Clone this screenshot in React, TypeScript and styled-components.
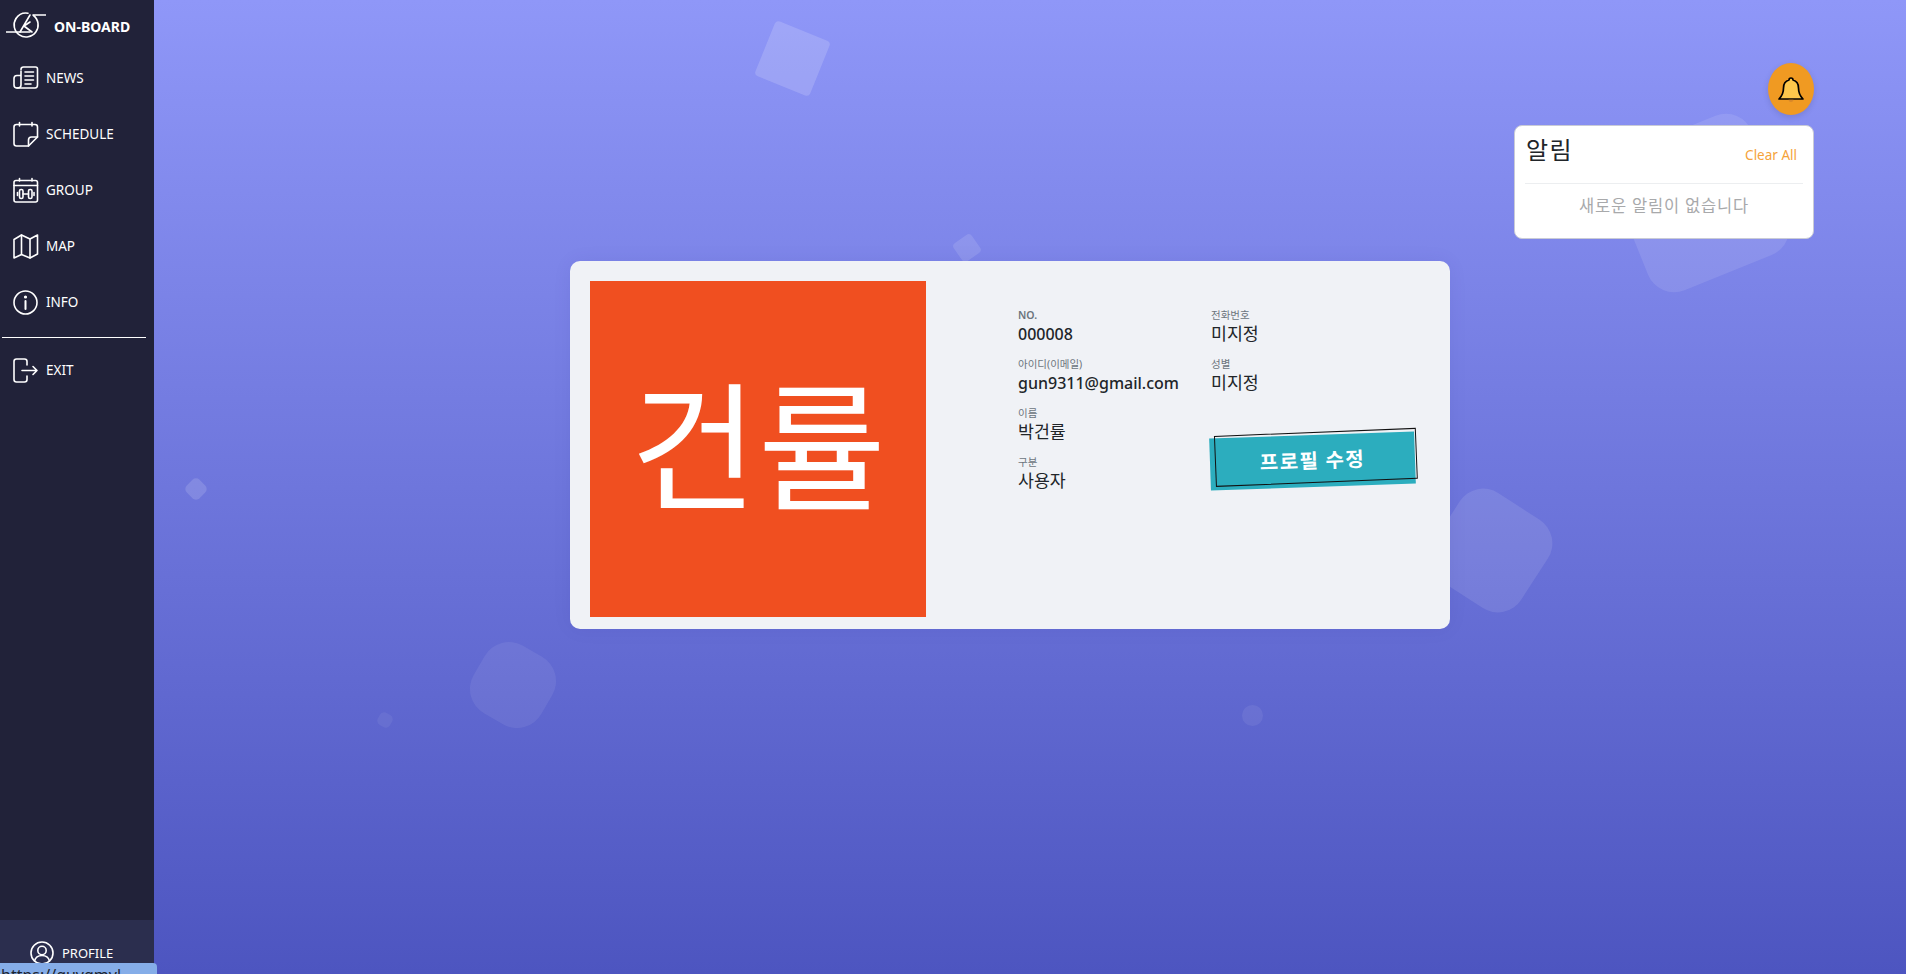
import React from 'react';
import styled, { createGlobalStyle } from 'styled-components';

const GlobalStyle = createGlobalStyle`
  html, body {
    margin: 0;
    height: 100%;
    overflow: hidden;
    font-family: "Noto Sans", "Noto Sans CJK KR", sans-serif;
  }
  #root {
    height: 100%;
  }
`;

const Page = styled.div`
  position: relative;
  display: flex;
  width: 100%;
  height: 974px;
  overflow: hidden;
`;

const Sidebar = styled.nav`
  flex: 0 0 154px;
  display: flex;
  flex-direction: column;
  background: #212239;
  color: #fff;
`;

const Brand = styled.div`
  display: flex;
  align-items: center;
  gap: 8px;
  box-sizing: border-box;
  height: 50px;
  padding: 2px 0 0 6px;
  font-size: 14px;
  font-weight: 700;
`;

const MenuList = styled.ul`
  list-style: none;
  margin: 0;
  padding: 0;
`;

const MenuItem = styled.li`
  display: flex;
  align-items: center;
  gap: 7px;
  height: 56px;
  padding-left: 12px;
  font-size: 13.5px;
  line-height: 18px;

  svg {
    flex: none;
  }
`;

const Divider = styled.hr`
  width: 144px;
  margin: 7px 0 4px 2px;
  border: 0;
  border-top: 1px solid #fff;
`;

const ProfileRow = styled.div`
  display: flex;
  align-items: center;
  gap: 8px;
  box-sizing: border-box;
  height: 54px;
  margin-top: auto;
  padding: 12px 0 0 30px;
  font-size: 13px;
  background: #2b2e4e;
`;

const StatusTip = styled.div`
  position: absolute;
  left: 0;
  bottom: 0;
  width: 157px;
  height: 11px;
  overflow: hidden;
  background: #85ade8;
  border-top-right-radius: 4px;
  color: #1c2430;
  font-size: 16px;
  line-height: 24px;
  padding-left: 1px;
  box-sizing: border-box;
`;

const Main = styled.main`
  position: relative;
  flex: 1;
  padding: 261px 0 0 416px;
  background: linear-gradient(180deg, #8f97f8 0%, #4d55c0 100%);
`;

const Shape = styled.span<{ $x: number; $y: number; $size: number; $rotate: number; $radius: number; $alpha: number }>`
  position: absolute;
  left: ${(p) => p.$x - 154}px;
  top: ${(p) => p.$y}px;
  width: ${(p) => p.$size}px;
  height: ${(p) => p.$size}px;
  border-radius: ${(p) => p.$radius}px;
  background: rgba(255, 255, 255, ${(p) => p.$alpha});
  transform: rotate(${(p) => p.$rotate}deg);
`;

const Card = styled.section`
  position: relative;
  display: flex;
  box-sizing: border-box;
  width: 880px;
  height: 368px;
  padding: 20px;
  background: #f0f2f6;
  border-radius: 10px;
  box-shadow: 0 0 20px rgba(40, 40, 120, 0.06);
`;

const Avatar = styled.div`
  flex: none;
  display: flex;
  align-items: center;
  justify-content: center;
  box-sizing: border-box;
  width: 336px;
  height: 336px;
  padding-bottom: 22px;
  background: #f04f20;
`;

const AvatarText = styled.span`
  color: #fff;
  font-family: "Noto Sans CJK KR", sans-serif;
  font-size: 139px;
  font-weight: 400;
  line-height: 1;
  filter: blur(0.6px);
`;

const InfoGrid = styled.div`
  display: grid;
  grid-template-columns: 193px 200px;
  grid-auto-rows: 49px;
  margin: 27px 0 0 92px;
`;

const Field = styled.div`
  display: flex;
  flex-direction: column;
`;

const FieldLabel = styled.span<{ $bold?: boolean }>`
  font-size: 10.5px;
  font-weight: ${(p) => (p.$bold ? 600 : 400)};
  line-height: 15px;
  color: #6c757d;
`;

const FieldValue = styled.span<{ $latin?: boolean }>`
  font-size: ${(p) => (p.$latin ? 16 : 17.3)}px;
  font-weight: ${(p) => (p.$latin ? 500 : 400)};
  line-height: 22px;
  color: #212529;
`;

const EditCell = styled.div`
  grid-column: 2;
  grid-row: 3 / span 2;
  padding-top: 29px;
`;

const EditButton = styled.button`
  position: relative;
  display: block;
  width: 205px;
  height: 52px;
  margin-left: -1px;
  padding: 0 0 4px;
  border: 0;
  background: #2cadbe;
  color: #fff;
  font-family: "Noto Sans CJK KR", sans-serif;
  font-size: 20px;
  font-weight: 700;
  letter-spacing: 1.5px;
  transform: rotate(-2deg);

  &::after {
    content: '';
    position: absolute;
    inset: -3px -2px 4px 5px;
    border: 1px solid #111;
    transform: rotate(-0.3deg);
  }
`;

const BellButton = styled.div`
  position: absolute;
  top: 63px;
  right: 92px;
  display: flex;
  align-items: center;
  justify-content: center;
  width: 46px;
  height: 52px;
  padding-top: 2px;
  box-sizing: border-box;
  border-radius: 50%;
  background: #f09a22;
  box-shadow: 0 2px 6px rgba(0, 0, 0, 0.12);
`;

const NoticePanel = styled.aside`
  position: absolute;
  top: 125px;
  right: 92px;
  box-sizing: border-box;
  width: 300px;
  height: 114px;
  padding: 0 10px;
  background: #fff;
  border: 1px solid #c9cbd6;
  border-radius: 8px;
`;

const NoticeHead = styled.div`
  display: flex;
  align-items: center;
  justify-content: space-between;
  box-sizing: border-box;
  height: 58px;
  padding: 0 6px 13px 1px;
  border-bottom: 1px solid #eceef0;
`;

const NoticeTitle = styled.span`
  font-family: "Noto Sans CJK KR", sans-serif;
  font-size: 24px;
  font-weight: 400;
  letter-spacing: 1.5px;
  color: #212529;
`;

const ClearAll = styled.span`
  padding-top: 14px;
  font-size: 13.5px;
  color: #f5a33a;
`;

const NoticeEmpty = styled.div`
  padding-top: 10px;
  text-align: center;
  font-size: 16.5px;
  font-weight: 400;
  letter-spacing: 0.8px;
  line-height: 24px;
  color: #a8a9ab;
`;

const Icon = styled.svg.attrs({
  fill: 'none',
  stroke: 'currentColor',
  strokeWidth: 1.6,
  strokeLinecap: 'round',
  strokeLinejoin: 'round',
})``;

const menu = [
  {
    label: 'NEWS',
    icon: (
      <>
        <path d="M9 4.5C9 3 10 2 11.5 2H23.5C25 2 25.5 3 25.5 4V20C25.5 22 24.5 23 23 23H5" />
        <path d="M9 6V20C9 22 7.5 23 5 23C3 23 2 22 2 20V13.5C2 11.5 3 10.5 5 10.5H9" />
        <path d="M13 7H21.5M13 11H21.5M13 15H21.5M13 19H19" />
      </>
    ),
  },
  {
    label: 'SCHEDULE',
    icon: (
      <>
        <path d="M16.5 25H4.5C3 25 2 24 2 22.5V6C2 4.5 3 3.5 4.5 3.5H23C24.5 3.5 25.5 4.5 25.5 6V16L16.5 25Z" />
        <path d="M7.5 1.5V5M20 1.5V5" />
        <path d="M16.5 25V19C16.5 17 17.5 16 19.5 16H25.5" />
      </>
    ),
  },
  {
    label: 'GROUP',
    icon: (
      <>
        <path d="M4 3.5H23.5C25 3.5 25.5 4.5 25.5 5.5V23C25.5 24 25 25 23.5 25H4C3 25 2 24 2 23V5.5C2 4.5 3 3.5 4 3.5Z" />
        <path d="M2 8.5H25.5M7.5 1.5V4M20 1.5V4" />
        <path d="M11 17H16.5M5.5 15.5V18.5M22 15.5V18.5" />
        <rect x="7.5" y="12.5" width="3.5" height="9" rx="1.5" />
        <rect x="16.5" y="12.5" width="3.5" height="9" rx="1.5" />
      </>
    ),
  },
  {
    label: 'MAP',
    icon: (
      <>
        <path d="M2 6.5L9.5 2L18 6L25.5 2V21L18 25L9.5 21.5L2 25V6.5Z" />
        <path d="M9.5 2V21.5M18 6V25" />
      </>
    ),
  },
  {
    label: 'INFO',
    icon: (
      <>
        <circle cx="13.5" cy="13.5" r="11.5" />
        <path d="M13.5 12V20" strokeWidth="2" />
        <circle cx="13.5" cy="8" r="0.8" fill="currentColor" />
      </>
    ),
  },
];

function NavIcon({ children }: { children: React.ReactNode }) {
  return (
    <Icon width="27" height="27" viewBox="0 0 27 27">
      {children}
    </Icon>
  );
}

const fields = [
  { label: 'NO.', value: '000008', latin: true },
  { label: '전화번호', value: '미지정' },
  { label: '아이디(이메일)', value: 'gun9311@gmail.com', latin: true },
  { label: '성별', value: '미지정' },
  { label: '이름', value: '박건률' },
];

export default function App() {
  return (
    <>
      <GlobalStyle />
      <Page>
        <Sidebar>
          <Brand>
            <Icon width="40" height="28" viewBox="0 0 40 28" strokeWidth="1.5">
              <path d="M27.5 3.5A12 12 0 1 1 10 6.5" />
              <path d="M10 6.5A12 12 0 0 1 22 1.2" />
              <path d="M0.5 20H24M27 3H40" />
              <path d="M14 20L24 3M18 14L24 10M18 14L26 20" />
            </Icon>
            ON-BOARD
          </Brand>
          <MenuList>
            {menu.map((m) => (
              <MenuItem key={m.label}>
                <NavIcon>{m.icon}</NavIcon>
                {m.label}
              </MenuItem>
            ))}
          </MenuList>
          <Divider />
          <MenuList>
            <MenuItem>
              <NavIcon>
                <path d="M15 8V4.5C15 3 14 2 12.5 2H4.5C3 2 2 3 2 4.5V22.5C2 24 3 25 4.5 25H12.5C14 25 15 24 15 22.5V19" />
                <path d="M10 13.5H25M21 9.5L25 13.5L21 17.5" />
              </NavIcon>
              EXIT
            </MenuItem>
          </MenuList>
          <ProfileRow>
            <Icon width="24" height="24" viewBox="0 0 24 24" strokeWidth="1.3">
              <circle cx="12" cy="12" r="11" />
              <circle cx="12" cy="9.5" r="4.2" />
              <path d="M4.5 20C5.5 16 8.5 14.5 12 14.5C15.5 14.5 18.5 16 19.5 20" />
            </Icon>
            PROFILE
          </ProfileRow>
        </Sidebar>

        <Main>
          <Shape $x={763} $y={29} $size={59} $rotate={22} $radius={4} $alpha={0.16} />
          <Shape $x={956} $y={237} $size={22} $rotate={-35} $radius={4} $alpha={0.12} />
          <Shape $x={187} $y={480} $size={18} $rotate={45} $radius={5} $alpha={0.14} />
          <Shape $x={378} $y={713} $size={14} $rotate={30} $radius={5} $alpha={0.06} />
          <Shape $x={474} $y={646} $size={78} $rotate={30} $radius={28} $alpha={0.07} />
          <Shape $x={1242} $y={705} $size={21} $rotate={0} $radius={11} $alpha={0.07} />
          <Shape $x={1438} $y={498} $size={105} $rotate={33} $radius={28} $alpha={0.1} />
          <Shape $x={1625} $y={128} $size={150} $rotate={-22} $radius={28} $alpha={0.1} />

          <Card>
            <Avatar>
              <AvatarText>건률</AvatarText>
            </Avatar>
            <InfoGrid>
              {fields.map((f) => (
                <Field key={f.label}>
                  <FieldLabel $bold={f.label === 'NO.'}>{f.label}</FieldLabel>
                  <FieldValue $latin={f.latin}>{f.value}</FieldValue>
                </Field>
              ))}
              <EditCell>
                <EditButton>프로필 수정</EditButton>
              </EditCell>
              <Field>
                <FieldLabel>구분</FieldLabel>
                <FieldValue>사용자</FieldValue>
              </Field>
            </InfoGrid>
          </Card>
        </Main>

        <BellButton>
          <svg width="28" height="30" viewBox="0 0 28 30" fill="#fdc74c" stroke="#000" strokeWidth="1.7" strokeLinejoin="round">
            <path d="M14 3C15.5 3 16 4 16 5C20 6 21.5 9 21.5 13C21.5 18 23 21 26 24H2C5 21 6.5 18 6.5 13C6.5 9 8 6 12 5C12 4 12.5 3 14 3Z" />
            <path d="M11.5 24.8C11.5 26 12.5 27 14 27C15.5 27 16.5 26 16.5 24.8" fill="#d8882a" stroke="none" />
          </svg>
        </BellButton>
        <NoticePanel>
          <NoticeHead>
            <NoticeTitle>알림</NoticeTitle>
            <ClearAll>Clear All</ClearAll>
          </NoticeHead>
          <NoticeEmpty>새로운 알림이 없습니다</NoticeEmpty>
        </NoticePanel>
        <StatusTip>https://guvgmyl</StatusTip>
      </Page>
    </>
  );
}
